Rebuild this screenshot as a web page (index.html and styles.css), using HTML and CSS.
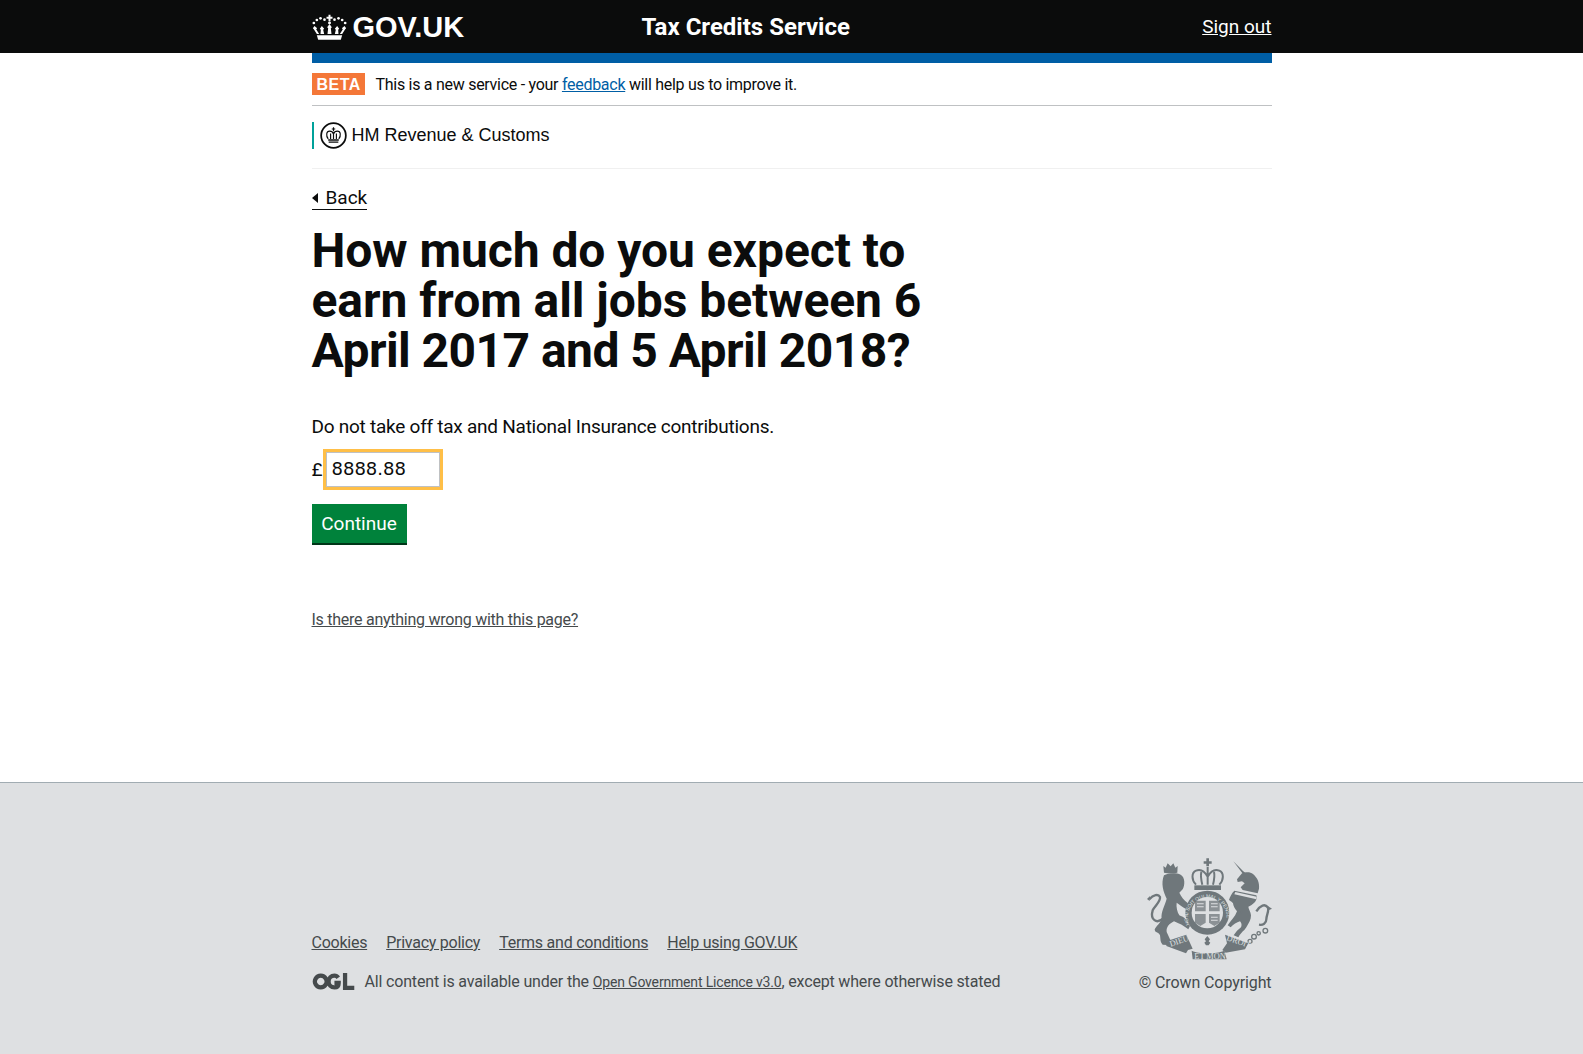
FILE: index.html
```html
<!DOCTYPE html>
<html lang="en">

<head>
    <meta charset="UTF-8">
    <title>Tax Credits Service</title>
    <link rel="stylesheet" href="styles.css">
</head>

<body>
    <header class="global-header">
        <div class="wrap header-row">
            <a class="logo" href="#">
                <svg class="crown" viewBox="0 0 104 78" width="35" height="26" aria-hidden="true">
                    <g fill="#fff">
                        <path d="M49 2h6v6h6v6h-6v7h-6v-7h-6V8h6z"/>
                        <circle cx="52" cy="26" r="4.500"/>
                        <circle cx="37" cy="17" r="4"/><circle cx="67" cy="17" r="4"/>
                        <circle cx="25" cy="13" r="4"/><circle cx="79" cy="13" r="4"/>
                        <circle cx="14" cy="18" r="4"/><circle cx="90" cy="18" r="4"/>
                        <circle cx="5" cy="27" r="4"/><circle cx="99" cy="27" r="4"/>
                        <path d="M52 30l7 10-3 3 2 17H46l2-17-3-3z"/>
                        <path d="M29 36l7 8-3 3 3 13H25l1-13-3-3zM75 36l6 8-3 3 1 13H68l3-13-3-3z"/>
                        <path d="M7 36l8 7-3 3 9 14H14L5 46l-3-3zM97 36l5 7-3 3-9 14H83l9-14-3-3z"/>
                        <path d="M14 64h76l-4 13H18z"/>
                    </g>
                </svg>
                <span class="logo-text">GOV.UK</span>
            </a>
            <a class="service-name" href="#">Tax Credits Service</a>
            <a class="sign-out" href="#">Sign out</a>
        </div>
    </header>

    <main class="wrap">
        <div class="blue-bar"></div>
        <div class="phase-banner">
            <strong class="phase-tag">BETA</strong>
            <span>This is a new service - your <a href="#">feedback</a> will help us to improve it.</span>
        </div>
        <div class="org-row">
            <div class="org">
                <svg class="org-crest" viewBox="0 0 28 28" width="27" height="27" aria-hidden="true">
                    <circle cx="14" cy="14" r="12.800" fill="none" stroke="#0b0c0c" stroke-width="1.800"/>
                    <path fill="none" stroke="#0b0c0c" stroke-width="1.200" d="M8.500 17.500C6 14 6.500 9.500 10 9.500c2 0 3.500 1.500 4 3 .5-1.500 2-3 4-3 3.500 0 4 4.500 1.500 8M14 12.500v5M11 12v5.500M17 12v5.500"/>
                    <path fill="#0b0c0c" d="M13.400 5.500h1.200v1.200h1.200v1.200h-1.200v1.800h-1.200V7.900h-1.200V6.700h1.200zM8.500 18h11v1.500h-11zM9 20.200h10v1.300H9z"/>
                </svg>
                <span>HM Revenue &amp; Customs</span>
            </div>
        </div>

        <a class="back" href="#">Back</a>

        <h1>How much do you expect to earn from all jobs between 6 <span class="tight">April 2017 and 5 April 2018?</span></h1>

        <p class="hint">Do not take off tax and National Insurance contributions.</p>

        <div class="amount">
            <label for="amount">£</label>
            <input id="amount" type="text" value="8888.88">
        </div>

        <button class="button" type="button">Continue</button>

        <p class="report"><a href="#">Is there anything wrong with this page?</a></p>
    </main>

    <footer>
        <div class="wrap footer-row">
            <div class="footer-meta">
                <ul class="footer-links">
                    <li><a href="#">Cookies</a></li>
                    <li><a href="#">Privacy policy</a></li>
                    <li><a href="#">Terms and conditions</a></li>
                    <li><a href="#">Help using GOV.UK</a></li>
                </ul>
                <div class="licence">
                    <svg class="ogl" viewBox="0 0 44 18" width="43" height="17" aria-hidden="true">
                        <path fill="none" stroke="#454a4c" stroke-width="4.500" d="M8.500 2.800a6.200 6.200 0 1 0 .01 0zM27 5c-1-1.500-2.500-2.200-4-2.200a6.200 6.200 0 0 0 0 12.400c2.800 0 4.500-1.500 4.500-4.700H23"/>
                        <path fill="#454a4c" d="M32 0h4.500v13.500H44V18H32z"/>
                    </svg>
                    <span>All content is available under the <a href="#">Open Government Licence v3.0</a>, except where otherwise stated</span>
                </div>
            </div>
            <div class="copyright">
                <svg class="crest" viewBox="21 18 375 306" width="125" height="102" aria-hidden="true">
                    <g fill="#6f777b">
                        <!-- lion -->
                        <path d="M72 62l-2-20 7 5 6-13 9 9 8-9 6 13 7-5-1 20c-12 3-28 3-40 0z"/>
                        <path d="M72 70C85 62 110 62 122 68c14 8 13 32 6 44l-10 10c6 13 14 23 24 30l8 13-10 7c-12-7-22-14-30-20-2 13 2 28 8 38 12 5 22 10 24 22l8 10-5 10c-15-12-27-17-43-24-14 7-24 17-22 32l10 22c5 8 10 14 10 18l-32-2c-8-8-6-16-8-28-5-12-15-5-16-18 6-12 16-17 21-32-3-20 10-40 15-60C70 120 62 95 72 70z"/>
                        <path fill="none" stroke="#6f777b" stroke-width="7" d="M70 198c-20 20-40 5-32-23 7-15 24-25 22-40-5-10-20-7-32 7"/>
                        <path d="M30 132l-9 9 8 6z"/>
                        <!-- crown -->
                        <path d="M199 19h8v9h8v7h-8v8h-8v-8h-8v-7h8z"/>
                        <path fill="none" stroke="#6f777b" stroke-width="6" d="M168 98c-14-14-14-36 0-42 14-6 27 4 35 18 8-14 21-24 35-18 14 6 14 28 0 42M203 45v53M184 60c-3 12 0 26 3 38M222 60c3 12 0 26-3 38"/>
                        <path d="M163 100h80v14h-80z"/>
                        <!-- unicorn -->
                        <path d="M280 28l29 29 10 8-6 6z"/>
                        <path d="M306 64c10-4 24-6 33 2 14 12 20 26 18 44l-4 14-45-10-6-8 12-12-8-6-13 2-2-8z"/>
                        <path d="M283 116l66 14c3 6 1 14-4 20-6 7-15 12-20 14 1 9 7 14 8 26 0 14-6 22-14 36l-6 8c-7 6-14 14-18 22l-14-6 10-14 12-10c4-8 0-15-3-18-10 3-20 9-28 18l-9-6c10-15 22-25 28-42-7-8-11-16-12-24-4-6-10-8-12-10 3-10 8-20 16-28z"/>
                        <path fill="none" stroke="#6f777b" stroke-width="7" d="M349 178c12-18 26-24 34-12 6 9-4 22-4 36 0 12-10 18-22 16"/>
                        <path d="M380 160l16 10-8 4z"/>
                        <path d="M286 120l64 14-1 8-66-15z" fill="#dee0e2"/>
                    </g>
                    <g fill="none" stroke="#6f777b" stroke-width="4">
                        <circle cx="342" cy="254" r="7"/><circle cx="376" cy="236" r="7"/><circle cx="356" cy="244" r="5"/><circle cx="330" cy="268" r="6"/><circle cx="300" cy="180" r="5"/>
                    </g>
                    <!-- shield and garter -->
                    <circle cx="202" cy="182" r="66" fill="#6f777b"/>
                    <circle cx="202" cy="182" r="47" fill="#dee0e2"/>
                    <path id="garter" fill="none" d="M152 225A58 58 0 1 1 252 225"/>
                    <text class="crest-motto"><textPath href="#garter" startOffset="3%">HONI SOIT QUI MAL Y PENSE</textPath></text>
                    <path fill="#6f777b" d="M165 146h32v32h-32zM207 146h32v32h-32zM165 186h32v26l-16 10-16-10zM207 186h32v26l-16 10-16-10z" opacity=".75"/>
                    <path fill="#dee0e2" d="M171 154h20v3h-20zM171 163h20v3h-20zM213 154h20v3h-20zM213 163h20v3h-20zM213 194h20v3h-20zM213 203h20v3h-20z"/>
                    <path fill="#6f777b" d="M194 262l8-10 8 10-4 6 5 4-5 8h-8l-5-8 5-4z"/>
                    <!-- motto ribbon -->
                    <path fill="#6f777b" d="M79 268l60-20 7 16 12 26-14 4-6 10-59-22z"/>
                    <path fill="#6f777b" d="M155 296c15 6 25 8 48 8 22 0 33-2 50-8l7 26H158z"/>
                    <path fill="#6f777b" d="M255 248l70 26-10 18-58 10-10-8 14-20z"/>
                    <text class="crest-scroll" transform="translate(92 284) rotate(-19)">DIEU</text>
                    <text class="crest-scroll" x="163" y="320">ET MON</text>
                    <text class="crest-scroll" transform="translate(258 264) rotate(19)">DROIT</text>
                </svg>
                <span>© Crown Copyright</span>
            </div>
        </div>
    </footer>
</body>

</html>
```

FILE: styles.css
```css
* {
    box-sizing: border-box;
}

body {
    margin: 0;
    font-family: 'Roboto', sans-serif;
    color: #0b0c0c;
    background-color: #fff;
}

.wrap {
    width: 960px;
    margin: 0 auto;
}

a {
    color: inherit;
}

.global-header {
    height: 53px;
    background-color: #0b0c0c;
    color: #fff;
}

.header-row {
    display: flex;
    align-items: center;
    height: 53px;
}

.logo {
    display: flex;
    align-items: center;
    gap: 6px;
    width: 330px;
    font-family: 'Liberation Sans', sans-serif;
    font-size: 29px;
    font-weight: bold;
    text-decoration: none;
}

.logo-text {
    margin-top: 2px;
}

.service-name {
    flex: 1;
    font-size: 24px;
    font-weight: bold;
    text-decoration: none;
}

.sign-out {
    font-size: 19px;
}

main {
    height: 729px;
}

.blue-bar {
    height: 10px;
    background-color: #005ea5;
}

.phase-banner {
    display: flex;
    align-items: center;
    gap: 11px;
    height: 43px;
    border-bottom: 1px solid #bfc1c3;
    font-size: 16px;
    letter-spacing: -0.28px;
}

.phase-banner a {
    color: #005ea5;
}

.phase-tag {
    width: 53px;
    height: 22px;
    padding-left: 5px;
    line-height: 24px;
    background-color: #f47738;
    color: #fff;
    font-family: 'Liberation Sans', sans-serif;
    font-size: 16px;
    letter-spacing: 0.5px;
}

.org-row {
    display: flex;
    align-items: center;
    height: 63px;
    padding-bottom: 4px;
    border-bottom: 1px solid #f0f0f0;
}

.org {
    display: flex;
    align-items: center;
    gap: 5px;
    height: 27px;
    padding-left: 6px;
    border-left: 2px solid #00a19a;
    font-family: 'Liberation Sans', sans-serif;
    font-size: 18px;
}

.back {
    display: inline-block;
    position: relative;
    margin-top: 18px;
    padding-left: 14px;
    line-height: 22px;
    font-size: 19px;
    text-decoration: none;
    border-bottom: 1px solid #0b0c0c;
}

.back::before {
    content: "";
    position: absolute;
    left: 0;
    top: 6px;
    border-top: 5px solid transparent;
    border-bottom: 5px solid transparent;
    border-right: 6px solid #0b0c0c;
}

h1 {
    width: 630px;
    margin: 16px 0 0;
    font-size: 48px;
    line-height: 50px;
    font-weight: bold;
    letter-spacing: -0.06px;
}

.tight {
    display: block;
    letter-spacing: -0.55px;
}

.hint {
    margin: 38px 0 0;
    font-size: 19px;
    line-height: 25px;
    letter-spacing: -0.25px;
}

.amount {
    display: flex;
    align-items: center;
    margin-top: 13px;
    font-size: 19px;
}

.amount label {
    width: 14px;
}

.amount input {
    width: 114px;
    height: 35px;
    padding: 0 5px 2px;
    border: 1px solid #bfc1c3;
    outline: 3px solid #ffbf47;
    font-family: 'DejaVu Sans', sans-serif;
    font-size: 18px;
    color: #0b0c0c;
    border-radius: 0;
}

.button {
    display: block;
    width: 95px;
    height: 41px;
    margin-top: 17px;
    padding: 0;
    border: 0;
    border-bottom: 2px solid #003618;
    background-color: #00823b;
    color: #fff;
    font-family: 'Roboto', sans-serif;
    font-size: 19px;
}

.report {
    margin: 65px 0 0;
    font-size: 16px;
    letter-spacing: -0.26px;
    color: #454a4c;
}

footer {
    height: 272px;
    border-top: 1px solid #a1acb2;
    background-color: #dee0e2;
    color: #454a4c;
}

.footer-row {
    display: flex;
    justify-content: space-between;
    align-items: flex-end;
    height: 100%;
    padding-bottom: 63px;
}

.footer-links {
    display: flex;
    gap: 19px;
    margin: 0 0 20px;
    padding: 0;
    list-style: none;
    font-size: 16px;
    letter-spacing: -0.25px;
}

.licence {
    display: flex;
    align-items: center;
    gap: 10px;
    font-size: 16px;
    letter-spacing: -0.17px;
}

.licence a {
    font-size: 14px;
}

.copyright {
    display: flex;
    flex-direction: column;
    align-items: flex-end;
    gap: 13px;
    margin-bottom: -1px;
    font-size: 16px;
    letter-spacing: -0.1px;
}

.crest-motto {
    font-family: 'Liberation Sans', sans-serif;
    font-size: 15px;
    fill: #dee0e2;
}

.crest-scroll {
    font-family: 'Liberation Serif', serif;
    font-size: 25px;
    fill: #dee0e2;
}
```
